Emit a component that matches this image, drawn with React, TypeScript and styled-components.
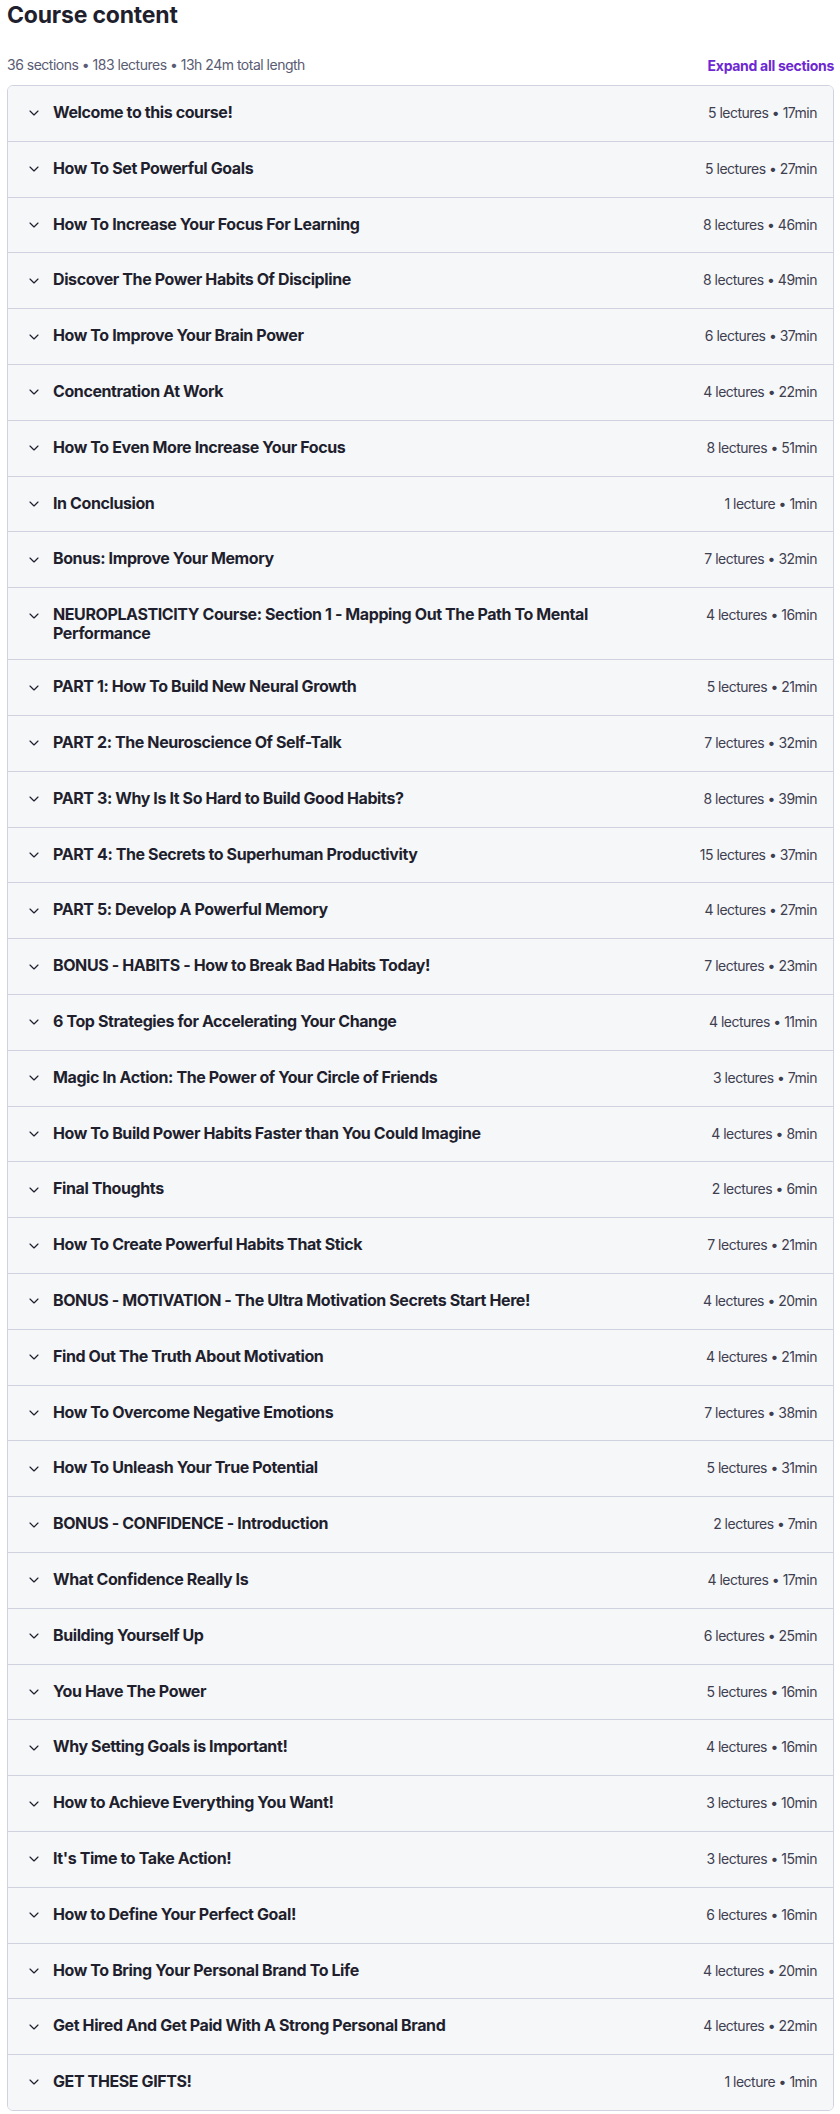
import React from 'react';
import styled, { createGlobalStyle } from 'styled-components';
import { ChevronDown } from 'lucide-react';

const GlobalStyle = createGlobalStyle`
    body {
        margin: 0;
        background: #ffffff;
        font-family: Inter, 'Noto Sans', sans-serif;
        color: #1f1f2e;
    }
`;

type Section = { title: string; lectures: number; length: string };

const sections: Section[] = [
    { title: 'Welcome to this course!', lectures: 5, length: '17min' },
    { title: 'How To Set Powerful Goals', lectures: 5, length: '27min' },
    { title: 'How To Increase Your Focus For Learning', lectures: 8, length: '46min' },
    { title: 'Discover The Power Habits Of Discipline', lectures: 8, length: '49min' },
    { title: 'How To Improve Your Brain Power', lectures: 6, length: '37min' },
    { title: 'Concentration At Work', lectures: 4, length: '22min' },
    { title: 'How To Even More Increase Your Focus', lectures: 8, length: '51min' },
    { title: 'In Conclusion', lectures: 1, length: '1min' },
    { title: 'Bonus: Improve Your Memory', lectures: 7, length: '32min' },
    {
        title: 'NEUROPLASTICITY Course: Section 1 - Mapping Out The Path To Mental Performance',
        lectures: 4,
        length: '16min',
    },
    { title: 'PART 1: How To Build New Neural Growth', lectures: 5, length: '21min' },
    { title: 'PART 2: The Neuroscience Of Self-Talk', lectures: 7, length: '32min' },
    { title: 'PART 3: Why Is It So Hard to Build Good Habits?', lectures: 8, length: '39min' },
    { title: 'PART 4: The Secrets to Superhuman Productivity', lectures: 15, length: '37min' },
    { title: 'PART 5: Develop A Powerful Memory', lectures: 4, length: '27min' },
    { title: 'BONUS - HABITS - How to Break Bad Habits Today!', lectures: 7, length: '23min' },
    { title: '6 Top Strategies for Accelerating Your Change', lectures: 4, length: '11min' },
    { title: 'Magic In Action: The Power of Your Circle of Friends', lectures: 3, length: '7min' },
    { title: 'How To Build Power Habits Faster than You Could Imagine', lectures: 4, length: '8min' },
    { title: 'Final Thoughts', lectures: 2, length: '6min' },
    { title: 'How To Create Powerful Habits That Stick', lectures: 7, length: '21min' },
    { title: 'BONUS - MOTIVATION - The Ultra Motivation Secrets Start Here!', lectures: 4, length: '20min' },
    { title: 'Find Out The Truth About Motivation', lectures: 4, length: '21min' },
    { title: 'How To Overcome Negative Emotions', lectures: 7, length: '38min' },
    { title: 'How To Unleash Your True Potential', lectures: 5, length: '31min' },
    { title: 'BONUS - CONFIDENCE - Introduction', lectures: 2, length: '7min' },
    { title: 'What Confidence Really Is', lectures: 4, length: '17min' },
    { title: 'Building Yourself Up', lectures: 6, length: '25min' },
    { title: 'You Have The Power', lectures: 5, length: '16min' },
    { title: 'Why Setting Goals is Important!', lectures: 4, length: '16min' },
    { title: 'How to Achieve Everything You Want!', lectures: 3, length: '10min' },
    { title: "It's Time to Take Action!", lectures: 3, length: '15min' },
    { title: 'How to Define Your Perfect Goal!', lectures: 6, length: '16min' },
    { title: 'How To Bring Your Personal Brand To Life', lectures: 4, length: '20min' },
    { title: 'Get Hired And Get Paid With A Strong Personal Brand', lectures: 4, length: '22min' },
    { title: 'GET THESE GIFTS!', lectures: 1, length: '1min' },
];

const Page = styled.div`
    padding: 2px 6px 0 7px;
`;

const Heading = styled.h2`
    margin: 0;
    font-size: 23px;
    line-height: 26px;
    font-weight: 700;
    color: #1f1f2e;
    letter-spacing: -0.2px;
`;

const SummaryBar = styled.div`
    display: flex;
    align-items: center;
    justify-content: space-between;
    margin-top: 26px;
    margin-bottom: 9px;
    line-height: 22px;
    font-size: 14px;
`;

const Summary = styled.span`
    color: #595c73;
    letter-spacing: -0.5px;
`;

const ExpandLink = styled.button`
    border: none;
    background: none;
    padding: 0;
    font-family: inherit;
    font-size: 14px;
    font-weight: 700;
    color: #6d28d2;
    letter-spacing: -0.3px;
    cursor: pointer;
`;

const Accordion = styled.div`
    border: 1px solid #d1d2e0;
    border-radius: 6px;
    overflow: hidden;
`;

const SectionRow = styled.div`
    display: flex;
    align-items: flex-start;
    padding: 16px 16px 16px 18px;
    background: #f6f7f9;
    & + & {
        border-top: 1px solid #d1d2e0;
    }
`;

const Toggle = styled.span`
    display: flex;
    align-items: center;
    height: 22.8px;
    margin-right: 11px;
    color: #1f1f2e;
`;

const SectionTitle = styled.h3`
    flex: 1;
    margin: 1px 40px 0 0;
    font-size: 16px;
    line-height: 19px;
    font-weight: 700;
    color: #1f1f2e;
    letter-spacing: -0.4px;
    max-width: 600px;
`;

const SectionMeta = styled.span`
    margin-left: auto;
    font-size: 14px;
    line-height: 22.8px;
    color: #3e4050;
    letter-spacing: -0.5px;
    white-space: nowrap;
`;

const App = () => {
    return (
        <Page>
            <GlobalStyle />
            <Heading>Course content</Heading>

            <SummaryBar>
                <Summary>36 sections • 183 lectures • 13h 24m total length</Summary>
                <ExpandLink>Expand all sections</ExpandLink>
            </SummaryBar>

            <Accordion>
                {sections.map((s) => (
                    <SectionRow key={s.title}>
                        <Toggle>
                            <ChevronDown size={16} strokeWidth={1.75} />
                        </Toggle>
                        <SectionTitle>{s.title}</SectionTitle>
                        <SectionMeta>
                            {s.lectures} {s.lectures === 1 ? 'lecture' : 'lectures'} • {s.length}
                        </SectionMeta>
                    </SectionRow>
                ))}
            </Accordion>
        </Page>
    );
};

export default App;
